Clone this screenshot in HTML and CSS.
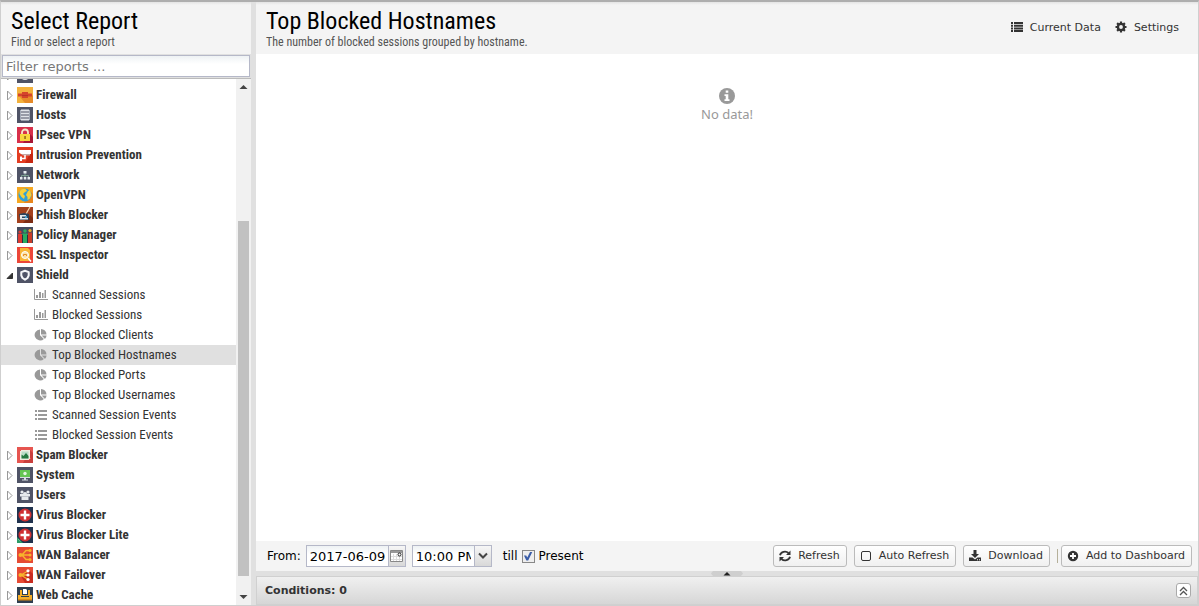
FILE: index.html
```html
<!DOCTYPE html>
<html lang="en">
<head>
    <meta charset="utf-8">
    <title>Reports</title>
    <link rel="stylesheet" href="styles.css">
</head>
<body>
    <svg class="sprite" aria-hidden="true">
        <symbol id="arrow" viewBox="0 0 8 16"><path d="M1.500 4v9l4.500-4.500z" fill="#fff" stroke="#999"/></symbol>
        <symbol id="arrow-open" viewBox="0 0 8 16"><path d="M1 11.500L6.500 6v5.500z" fill="#333" stroke="#333"/></symbol>
        <symbol id="bars" viewBox="0 0 14 12"><path d="M.5 0v10.500H14" fill="none" stroke="#999"/><path d="M2 6h2v3H2zM5 3h2v6H5zM8 4h1.500v5H8zM10.500 1H12v8h-1.500z" fill="#999"/></symbol>
        <symbol id="pie" viewBox="0 0 14 12"><path d="M6 .5A5.500 5.500 0 1 0 9.900 10L6 6.200z" fill="#999"/><path d="M7 0a5.500 5.500 0 0 1 5.500 5.500H7zM7.600 6.500h5a5.500 5.500 0 0 1-1.600 3.400z" fill="#999"/></symbol>
        <symbol id="list" viewBox="0 0 14 12"><path d="M1 1h2v2H1zM4 1h9v2H4zM1 5h2v2H1zM4 5h9v2H4zM1 9h2v2H1zM4 9h9v2H4z" fill="#999"/></symbol>
    </svg>

    <aside class="sidebar">
        <header class="head">
            <h1>Select Report</h1>
            <p>Find or select a report</p>
        </header>
        <div class="filter">
            <input class="field" type="text" placeholder="Filter reports ..." aria-label="Filter reports">
        </div>
        <div class="tree-box">
            <ul class="tree">
                <li class="group"><svg class="arrow"><use href="#arrow"/></svg><svg class="app" viewBox="0 0 16 16"><path fill="#4f5366" d="M0 0h16v16H0z"/><circle cx="8" cy="9" r="4" fill="#e6e8ee"/></svg>Events</li>
                <li class="group"><svg class="arrow"><use href="#arrow"/></svg><svg class="app" viewBox="0 0 16 16"><path fill="#f3b13c" d="M0 0h16v16H0z"/><path fill="#e68a28" d="M15 8l1 1v7H8l-5-6z"/><path fill="#d5432b" d="M1 6.500h4V5h6v1.500h4v3h-4V11H5V9.500H1z"/><path fill="#b93424" d="M5 8h6v1H5z"/></svg>Firewall</li>
                <li class="group"><svg class="arrow"><use href="#arrow"/></svg><svg class="app" viewBox="0 0 16 16"><path fill="#4f5366" d="M0 0h16v16H0z"/><path fill="#dfe3e8" d="M4 2.500h8v2H4zM4 5.500h8v2H4zM4 8.500h8v2H4zM4 11.500h8v2H4z"/><path fill="#a3abb8" d="M3 3h1v10H3zM12 3h1v10h-1z"/></svg>Hosts</li>
                <li class="group"><svg class="arrow"><use href="#arrow"/></svg><svg class="app" viewBox="0 0 16 16"><path fill="#d8304a" d="M0 0h16v16H0z"/><path fill="#a81735" d="M12 6l4 4v6H6z"/><path d="M5 8V5.500a3 3 0 0 1 6 0V8" fill="none" stroke="#f3e6c8" stroke-width="1.800"/><path fill="#f7d53d" d="M3 7h10v7H3z"/><path fill="#8d6415" d="M7.300 9h1.500v3H7.300z"/></svg>IPsec VPN</li>
                <li class="group"><svg class="arrow"><use href="#arrow"/></svg><svg class="app" viewBox="0 0 16 16"><path fill="#e33d22" d="M0 0h16v16H0z"/><path fill="#c82812" d="M14 5l2 2v9H8z"/><path fill="#fff" d="M2 3h12v4H4L2 5.500z"/><path fill="#c3a9a8" d="M4 7h9v1.500H6z"/><path d="M8 8v3.500H4" fill="none" stroke="#fff" stroke-width="1.500"/><path fill="#fff" d="M3 9.500h2V14H3z"/></svg>Intrusion Prevention</li>
                <li class="group"><svg class="arrow"><use href="#arrow"/></svg><svg class="app" viewBox="0 0 16 16"><path fill="#4f5366" d="M0 0h16v16H0z"/><path d="M8 6v4M4.500 10V8.500h7V10" fill="none" stroke="#7d9e90"/><path fill="#e8ebef" d="M6.500 4h3v2.500h-3zM3 10h2.500v2.500H3zM6.800 10h2.500v2.500H6.800zM10.500 10H13v2.500h-2.500z"/></svg>Network</li>
                <li class="group"><svg class="arrow"><use href="#arrow"/></svg><svg class="app" viewBox="0 0 16 16"><path fill="#f6a821" d="M0 0h16v16H0z"/><path fill="#e9861d" d="M13 4l3 3v9H7z"/><circle cx="8" cy="8" r="6.500" fill="#2fa0d8"/><path fill="#f7d038" d="M2.500 5c1-3 4-3.500 6-3L10 4 8 5 6 7 8 9l-1 3-2.500-2-2-3zM11 4l2-1 1.500 5-2 4-2 1V10L9 8z"/></svg>OpenVPN</li>
                <li class="group"><svg class="arrow"><use href="#arrow"/></svg><svg class="app" viewBox="0 0 16 16"><path fill="#a4411d" d="M0 0h16v16H0z"/><path fill="#7d2d14" d="M13 8l3 3v5H6z"/><path d="M13 0L9 7" stroke="#f3d6b3" stroke-width="1.200"/><path fill="#2d435b" d="M2 7l5-1 5 1v6H3z"/><path fill="#e5e9ec" d="M3 8h6v1.500H5V11h6v1.500H3z"/><circle cx="9" cy="10" r="1.200" fill="#45a2d2"/></svg>Phish Blocker</li>
                <li class="group"><svg class="arrow"><use href="#arrow"/></svg><svg class="app" viewBox="0 0 16 16"><path fill="#464c5e" d="M0 0h16v16H0z"/><circle cx="3" cy="5" r="1.600" fill="#dd3a31"/><path fill="#dd3a31" d="M1 7h4v9H1z"/><circle cx="8" cy="4" r="1.800" fill="#29ad60"/><path fill="#29ad60" d="M5.500 6.500h5V16h-5z"/><circle cx="13" cy="3.500" r="1.600" fill="#edaf2f"/><path fill="#c83c28" d="M11 5.500h4V16h-4z"/><path stroke="#26313e" d="M5.500 8v8M10.500 8v8"/></svg>Policy Manager</li>
                <li class="group"><svg class="arrow"><use href="#arrow"/></svg><svg class="app" viewBox="0 0 16 16"><path fill="#ec4638" d="M0 0h16v16H0z"/><path fill="#f7b634" d="M3 1h8l2 2v11H3z"/><circle cx="8" cy="8" r="3.500" fill="#fbe3a5" stroke="#fff"/><path d="M6.500 9V7.500h3V9" fill="none" stroke="#e48b29"/><path d="M11 11l3 3.500" stroke="#fff" stroke-width="1.500"/></svg>SSL Inspector</li>
                <li class="group"><svg class="arrow"><use href="#arrow-open"/></svg><svg class="app" viewBox="0 0 16 16"><path fill="#4f5366" d="M0 0h16v16H0z"/><path d="M8 3.800l3.700 1.300v3.400L10.500 11 8 12.700 5.500 11 4.300 8.500V5.100z" fill="none" stroke="#f5f6f8" stroke-width="2" stroke-linejoin="round"/></svg>Shield</li>
                <li class="report"><svg><use href="#bars"/></svg>Scanned Sessions</li>
                <li class="report"><svg><use href="#bars"/></svg>Blocked Sessions</li>
                <li class="report"><svg><use href="#pie"/></svg>Top Blocked Clients</li>
                <li class="report selected"><svg><use href="#pie"/></svg>Top Blocked Hostnames</li>
                <li class="report"><svg><use href="#pie"/></svg>Top Blocked Ports</li>
                <li class="report"><svg><use href="#pie"/></svg>Top Blocked Usernames</li>
                <li class="report"><svg><use href="#list"/></svg>Scanned Session Events</li>
                <li class="report"><svg><use href="#list"/></svg>Blocked Session Events</li>
                <li class="group"><svg class="arrow"><use href="#arrow"/></svg><svg class="app" viewBox="0 0 16 16"><path fill="#e65550" d="M0 0h16v16H0z"/><path fill="#c93f3d" d="M13 3l3 3v10H6z"/><path fill="#f1ecdf" d="M3 3h10v10H3z"/><path fill="#b9dcc5" d="M4.500 4.500h7v7h-7z"/><path fill="#26783f" d="M4.500 11.500v-4l2 1.500L9 6l2.500 3v2.500z"/><path d="M2 5l2-2M12 13l2-2" stroke="#e65550"/></svg>Spam Blocker</li>
                <li class="group"><svg class="arrow"><use href="#arrow"/></svg><svg class="app" viewBox="0 0 16 16"><path fill="#4f5366" d="M0 0h16v16H0z"/><path fill="#64c552" d="M3 3h10v7H3z"/><circle cx="8" cy="6.500" r="1.700" fill="#e6f6e2"/><path fill="#d8dde2" d="M3 10h10v1H3zM7 11h2v1.500H7zM5 12.500h6v1H5z"/></svg>System</li>
                <li class="group"><svg class="arrow"><use href="#arrow"/></svg><svg class="app" viewBox="0 0 16 16"><path fill="#4f5366" d="M0 0h16v16H0z"/><g fill="#e7eaee"><circle cx="5" cy="5" r="1.600"/><circle cx="11" cy="5" r="1.600"/><path d="M3 7h10v2.500H3z"/><circle cx="8" cy="7" r="2"/><path d="M4.500 9.500h7V13h-7z"/></g></svg>Users</li>
                <li class="group"><svg class="arrow"><use href="#arrow"/></svg><svg class="app" viewBox="0 0 16 16"><path fill="#20324e" d="M0 0h16v16H0z"/><circle cx="8" cy="8" r="6.500" fill="#cf2f31"/><path fill="#fff" d="M6.800 3.500h2.400v3.300h3.300v2.400H9.200v3.300H6.800V9.200H3.500V6.800h3.300z"/></svg>Virus Blocker</li>
                <li class="group"><svg class="arrow"><use href="#arrow"/></svg><svg class="app" viewBox="0 0 16 16"><path fill="#20324e" d="M0 0h16v16H0z"/><circle cx="8" cy="8" r="6.500" fill="#cf2f31"/><path fill="#fff" d="M6.800 3.500h2.400v3.300h3.300v2.400H9.200v3.300H6.800V9.200H3.500V6.800h3.300z"/><path fill="#2c9c68" d="M0 10l6 6H0z"/><path d="M1 12l3 3" stroke="#8ccbaa" stroke-dasharray="1"/></svg>Virus Blocker Lite</li>
                <li class="group"><svg class="arrow"><use href="#arrow"/></svg><svg class="app" viewBox="0 0 16 16"><path fill="#e64b34" d="M0 0h16v16H0z"/><path d="M3 8h10M13 3.500H9L5 8l4 4.500h4" fill="none" stroke="#f7b42c" stroke-width="1.500"/><g fill="#f7b42c"><circle cx="3.500" cy="8" r="2"/><circle cx="13" cy="3.500" r="1.500"/><circle cx="13" cy="8" r="1.500"/><circle cx="13" cy="12.500" r="1.500"/></g></svg>WAN Balancer</li>
                <li class="group"><svg class="arrow"><use href="#arrow"/></svg><svg class="app" viewBox="0 0 16 16"><path fill="#e64b34" d="M0 0h16v16H0z"/><path fill="#c92c20" d="M12 3l4 4v9H8L4 9z"/><path d="M3 8h8M11 4L4 8l7 4.500" fill="none" stroke="#f7b42c" stroke-width="1.300"/><circle cx="3.500" cy="8" r="2" fill="#f7b42c"/><g fill="#fff"><circle cx="11" cy="3.800" r="1.600"/><circle cx="11" cy="8" r="1.600"/><circle cx="11" cy="12.500" r="1.600"/></g></svg>WAN Failover</li>
                <li class="group"><svg class="arrow"><use href="#arrow"/></svg><svg class="app" viewBox="0 0 16 16"><path fill="#2d3e50" d="M0 0h16v16H0z"/><path fill="#f5ae29" d="M3 3h2v5h6V3h2v5h2v5H1V8h2z"/><path fill="#fff" d="M6 2h3l1 1v4H6z"/><path fill="#2d3e50" d="M4 9h8v1H4z"/><path fill="#d98a16" d="M1 12h14v1.500H1z"/></svg>Web Cache</li>
            </ul>
            <div class="scrollbar">
                <svg width="9" height="6" viewBox="0 0 9 6"><path d="M4.500 1L8.500 5h-8z" fill="#444"/></svg>
                <div class="track"><div class="thumb"></div></div>
                <svg width="9" height="6" viewBox="0 0 9 6"><path d="M4.500 5L.5 1h8z" fill="#444"/></svg>
            </div>
        </div>
    </aside>

    <main class="main">
        <header class="head main-head">
            <div>
                <h1>Top Blocked Hostnames</h1>
                <p>The number of blocked sessions grouped by hostname.</p>
            </div>
            <div class="actions">
                <button class="link-btn" type="button"><svg width="12" height="10" viewBox="0 0 12 10"><path d="M0 0h2v2H0zM3 0h9v2H3zM0 2.700h2v2H0zM3 2.700h9v2H3zM0 5.400h2v2H0zM3 5.400h9v2H3zM0 8h2v2H0zM3 8h9v2H3z"/></svg>Current Data</button>
                <button class="link-btn" type="button"><svg width="12" height="12" viewBox="0 0 12 12"><circle cx="6" cy="6" r="3.100" fill="none" stroke="#333" stroke-width="2.400"/><path d="M6 .5v2M6 9.500v2M.5 6h2M9.500 6h2M2.100 2.100l1.400 1.400M8.500 8.500l1.400 1.400M2.100 9.900l1.400-1.400M8.500 3.500l1.400-1.400" stroke="#333" stroke-width="2.200"/></svg>Settings</button>
            </div>
        </header>

        <section class="content">
            <svg width="16" height="16" viewBox="0 0 16 16"><circle cx="8" cy="8" r="8" fill="#999"/><path d="M6.700 2.500h2.600v2.200H6.700zM5.500 6.200h3.800v5h1.200V13h-5v-1.800h1.200V8H5.500z" fill="#fff"/></svg>
            <p>No data!</p>
        </section>

        <div class="toolbar">
            <label for="from">From:</label>
            <div class="combo date">
                <input class="field" id="from" type="text" value="2017-06-09">
                <button type="button" aria-label="Pick a date"><svg width="14" height="14" viewBox="0 0 14 14"><path d="M.5 1.500h12v11H.5z" fill="#fff" stroke="#888"/><path d="M1 2h11v2H1z" fill="#999"/><path d="M3.500 5v7M6.500 5v7M9.500 5v7M1 7.500h11M1 10.500h11" stroke="#ddd"/><circle cx="9.500" cy="5.500" r="1.500" fill="#fff" stroke="#222"/></svg></button>
            </div>
            <div class="combo time">
                <select class="field" aria-label="From time"><option>10:00 PM</option></select>
                <span class="trigger"><svg width="10" height="8" viewBox="0 0 10 8"><path d="M1 1.500L5 5.500l4-4" fill="none" stroke="#444" stroke-width="2"/></svg></span>
            </div>
            <span class="till">till</span>
            <input class="check" id="present" type="checkbox" checked>
            <label for="present">Present</label>
            <div class="buttons">
                <button class="btn" type="button"><svg width="12" height="12" viewBox="0 0 12 12"><path d="M1 5.200A5 4.500 0 0 1 9.500 3M11 6.800A5 4.500 0 0 1 2.500 9" fill="none" stroke="#333" stroke-width="1.800"/><path d="M11.500.5v4.500H7zM.5 11.500V7H5z"/></svg>Refresh</button>
                <button class="btn" type="button"><svg width="12" height="12" viewBox="0 0 12 12"><rect x="1.500" y="1.500" width="9" height="9" rx="1.500" fill="none" stroke="#333"/></svg>Auto Refresh</button>
                <button class="btn" type="button"><svg width="12" height="12" viewBox="0 0 12 12"><path d="M4.500 0h3v4H10L6 8 2 4h2.500zM0 7.500h3.500L6 9.500l2.500-2H12V11H0z"/><path d="M8 9.800h1M10 9.800h1" stroke="#fff"/></svg>Download</button>
                <span class="sep"></span>
                <button class="btn" type="button"><svg width="12" height="12" viewBox="0 0 12 12"><circle cx="6" cy="6" r="5.200"/><path d="M6 3v6M3 6h6" stroke="#fff" stroke-width="1.800"/></svg>Add to Dashboard</button>
            </div>
        </div>

        <div class="splitter"><svg width="32" height="5" viewBox="0 0 32 5"><path d="M2 0h28l2 2.500L30 5H2L0 2.500z" fill="#cfcfcf"/><path d="M16 1l3.500 3.500h-7z" fill="#222"/></svg></div>
        <footer class="conditions">
            <span>Conditions: 0</span>
            <button type="button" aria-label="Expand conditions"><svg width="9" height="10" viewBox="0 0 9 10"><path d="M1 5l3.500-3.500L8 5M1 9l3.500-3.500L8 9" fill="none" stroke="#555" stroke-width="1.300"/></svg></button>
        </footer>
    </main>
</body>
</html>
```

FILE: styles.css
```css
* {
    box-sizing: border-box;
}
body {
    display: flex;
    height: 100vh;
    margin: 0;
    border: 1px solid #cfcfcf;
    border-top: 2px solid #aeaeae;
    background-color: #e0e0e0;
    color: #000;
    font: 12px "DejaVu Sans", sans-serif;
}
h1, p, ul {
    margin: 0;
    padding: 0;
}
button, input, select {
    margin: 0;
    font: inherit;
    color: inherit;
}
svg {
    flex: none;
}
.sprite {
    position: absolute;
    width: 0;
    height: 0;
}

/* panel headers */
.head {
    height: 52px;
    flex: none;
    padding: 5px 10px;
    background: linear-gradient(#e4e4e4, #f4f4f4 3px);
    font-family: "Roboto Condensed", "Liberation Sans Narrow", Roboto, sans-serif;
}
.head h1 {
    font-size: 24px;
    font-weight: 400;
    line-height: 28px;
}
.head p {
    font-size: 12px;
    line-height: 14px;
    color: #555;
}
.main-head {
    display: flex;
    justify-content: space-between;
}
.actions {
    display: flex;
    align-items: center;
    gap: 14px;
    padding: 0 9px 2px 0;
}
.link-btn {
    display: flex;
    align-items: center;
    gap: 7px;
    padding: 0;
    border: 0;
    background: none;
    color: #333;
    fill: #333;
    font: 11px "DejaVu Sans", sans-serif;
}

/* report tree */
.sidebar {
    display: flex;
    flex-direction: column;
    width: 250px;
    flex: none;
    margin-right: 5px;
}
.filter {
    display: flex;
    padding: 1px;
    border-bottom: 1px solid #bbb;
}
.field {
    width: 100%;
    min-width: 0;
    height: 22px;
    padding: 0 3px;
    border: 1px solid #b5b8c8;
    border-radius: 0;
    background: linear-gradient(#eef2f4, #fff 8px);
    font-size: 13px;
    outline: none;
}
.field::placeholder {
    color: #777;
}
.tree-box {
    display: flex;
    flex: 1;
    min-height: 0;
    background-color: #fff;
}
.tree {
    display: flex;
    flex: 1;
    flex-direction: column;
    justify-content: flex-end;
    overflow: hidden;
    list-style: none;
    color: #333;
    font: 13px "Roboto Condensed", "Liberation Sans Narrow", Roboto, sans-serif;
}
.tree li {
    display: flex;
    align-items: center;
    flex: none;
    height: 20px;
    padding-bottom: 2px;
    white-space: nowrap;
}
.tree li svg {
    margin-top: 2px;
}
.tree .group {
    padding-left: 5px;
    font-weight: bold;
}
.arrow {
    width: 8px;
    height: 16px;
    margin-right: 3px;
}
.app {
    width: 16px;
    height: 16px;
    margin-right: 3px;
}
.tree .report {
    gap: 4px;
    padding-left: 33px;
}
.report svg {
    width: 14px;
    height: 12px;
}
.tree .selected {
    background-color: #e0e0e0;
}
.scrollbar {
    display: flex;
    flex-direction: column;
    align-items: center;
    width: 15px;
    padding: 5px 0;
    background-color: #f1f1f1;
}
.track {
    display: flex;
    align-items: flex-end;
    flex: 1;
    width: 11px;
    padding-bottom: 18px;
}
.thumb {
    width: 100%;
    height: 73%;
    background-color: #c1c1c1;
}

/* report view */
.main {
    display: flex;
    flex: 1;
    flex-direction: column;
    min-width: 0;
}
.content {
    display: flex;
    flex: 1;
    flex-direction: column;
    align-items: center;
    gap: 1px;
    padding-top: 34px;
    background-color: #fff;
    color: #999;
    font: 13px/18px "Noto Sans", sans-serif;
}
.toolbar {
    display: flex;
    align-items: center;
    height: 30px;
    padding: 0 6px 0 11px;
    background-color: #f4f4f4;
}
.combo {
    display: flex;
    margin-left: 6px;
}
.combo .field {
    flex: 1;
    appearance: none;
}
.combo button, .trigger {
    display: flex;
    align-items: center;
    justify-content: center;
    width: 17px;
    padding: 0;
    border: 1px solid #b5b8c8;
    border-left: 0;
    background: linear-gradient(#f6f6f6, #d8d8d8);
}
.date {
    width: 100px;
    margin-left: 5px;
}
.time {
    width: 80px;
}
.till {
    margin: 0 4px 0 11px;
}
.check {
    display: flex;
    width: 13px;
    height: 13px;
    margin-right: 4px;
    padding: 1px;
    border: 1px solid #888;
    background-color: #eee;
    appearance: none;
}
.check:checked::before {
    content: "";
    flex: 1;
    background-color: #3c5ea8;
    clip-path: polygon(5% 45%, 30% 45%, 42% 68%, 75% 0, 100% 0, 52% 100%, 32% 100%);
}
.buttons {
    display: flex;
    align-items: center;
    gap: 7px;
    margin-left: auto;
}
.btn {
    display: flex;
    align-items: center;
    gap: 7px;
    height: 22px;
    padding: 0 6px 0 5px;
    border: 1px solid #bbb;
    border-radius: 3px;
    background: linear-gradient(#fff, #f0f0f0);
    color: #333;
    fill: #333;
    font-size: 11px;
    line-height: 18px;
    white-space: nowrap;
}
.sep {
    width: 1px;
    height: 14px;
    margin-right: -4px;
    background-color: #b5b09a;
}
.splitter {
    display: flex;
    justify-content: center;
    height: 5px;
}
.conditions {
    display: flex;
    align-items: center;
    justify-content: space-between;
    height: 29px;
    padding: 0 6px 0 8px;
    border: 1px solid #d0d0d0;
    background: linear-gradient(#f0f0f0, #d6d6d6);
    color: #333;
    font-size: 11px;
    font-weight: bold;
}
.conditions button {
    display: flex;
    align-items: center;
    justify-content: center;
    width: 15px;
    height: 15px;
    padding: 0;
    border: 1px solid #aaa;
    border-radius: 3px;
    background-color: #fff;
}
```
